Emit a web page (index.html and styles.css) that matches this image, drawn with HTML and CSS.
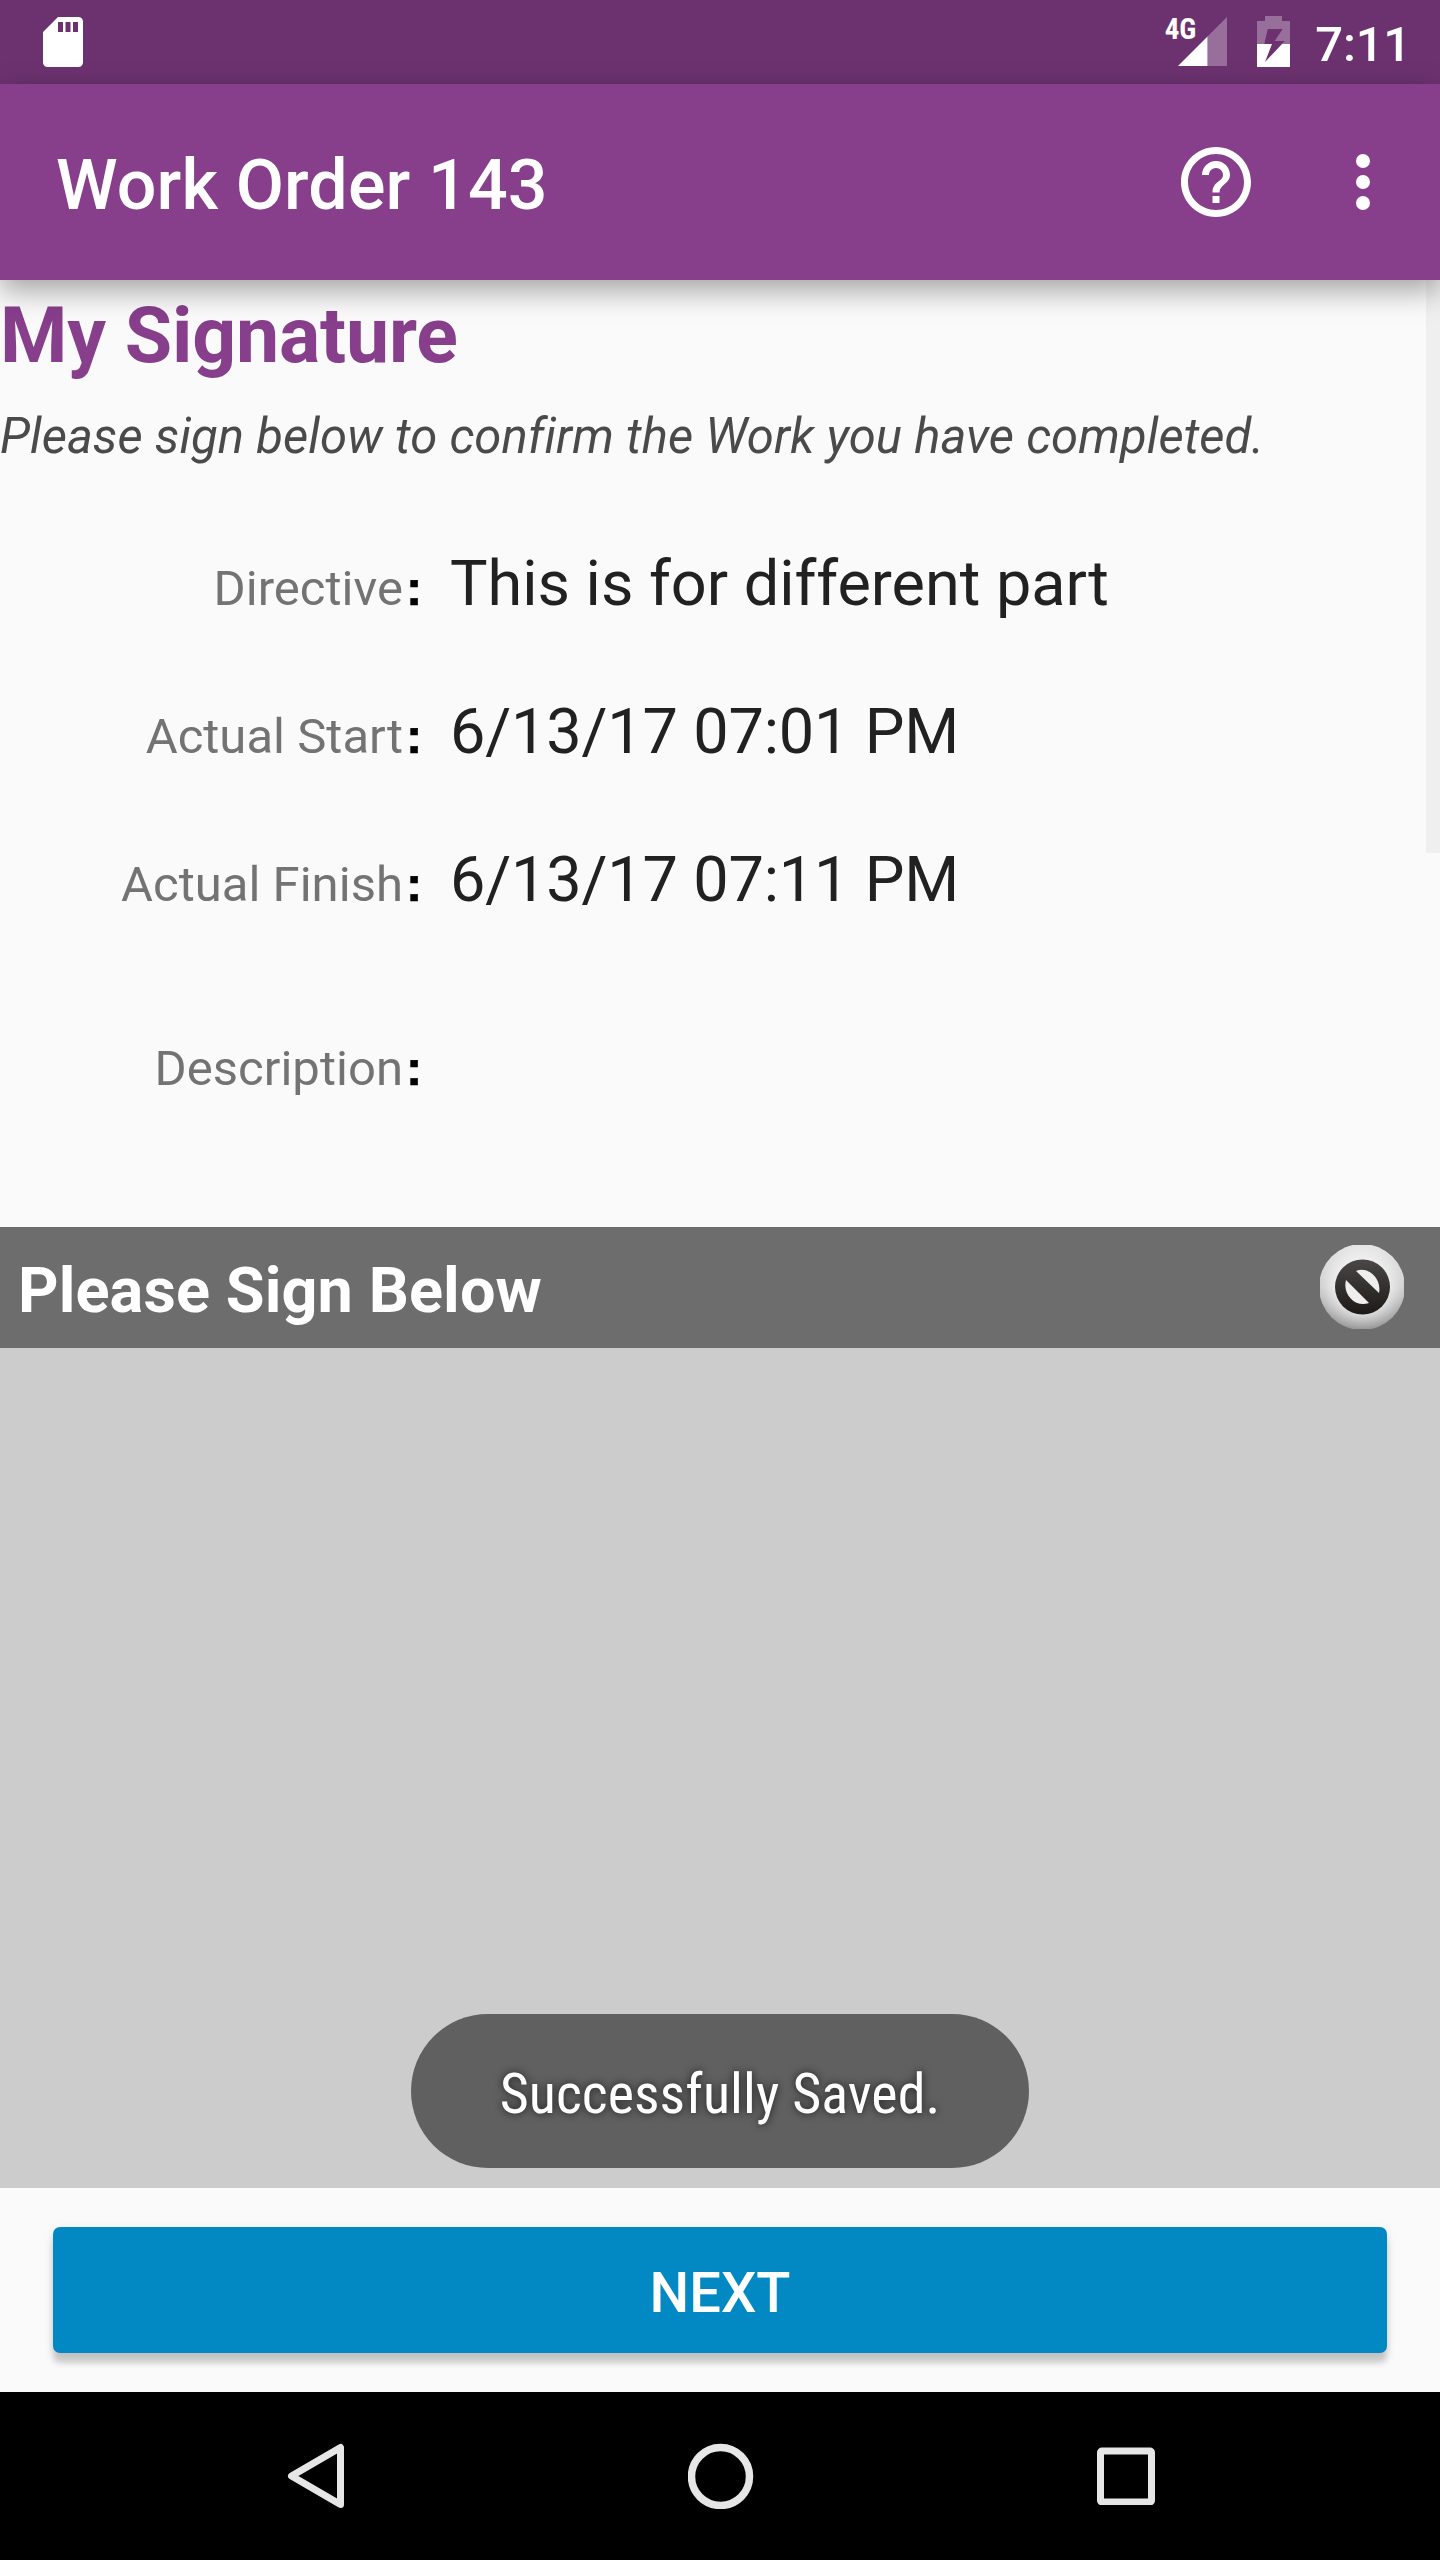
FILE: index.html
```html
<!DOCTYPE html>
<html lang="en">
<head>
<meta charset="utf-8">
<title>Work Order 143</title>
<link rel="stylesheet" href="styles.css">
</head>
<body>
<div class="screen">
  <div class="status-bar">
    <svg class="sd-card" width="40" height="50" viewBox="0 0 40 50"><path fill="#fff" fill-rule="evenodd" d="M15 0H35.500a4.500 4.500 0 0 1 4.500 4.500V45.500a4.500 4.500 0 0 1-4.500 4.500H4.500a4.500 4.500 0 0 1-4.500-4.500V15zM15 5v10h5V5zM22.500 5v10h5V5zM30 5v10h5V5z"/></svg>
    <div class="status-right">
      <span class="network">4G</span>
      <svg class="signal" width="49" height="49" viewBox="0 0 49 49"><path fill="#fff" fill-opacity=".3" d="M29.500 19.500 49 0V49H29.500z"/><path fill="#fff" d="M0 49 29.500 19.500V49z"/></svg>
      <svg class="battery" width="33" height="51" viewBox="0 0 33 51"><path fill="#fff" fill-opacity=".3" fill-rule="evenodd" d="M8 0H25V5H33V28H24.500L28 25H17.700L25.700 13H10.700L7.300 28H0V5H8z"/><path fill="#fff" d="M0 28H15L8 46 25 28H33V51H0z"/></svg>
      <span class="clock">7:11</span>
    </div>
  </div>
  <header class="app-bar">
    <h1 class="app-title">Work Order 143</h1>
    <svg class="help" width="84" height="84" viewBox="0 0 24 24"><path fill="#fff" d="M11 18h2v-2h-2v2zm1-16C6.480 2 2 6.480 2 12s4.480 10 10 10 10-4.480 10-10S17.520 2 12 2zm0 18c-4.410 0-8-3.590-8-8s3.590-8 8-8 8 3.590 8 8-3.590 8-8 8zm0-14c-2.210 0-4 1.790-4 4h2c0-1.100.9-2 2-2s2 .9 2 2c0 2-3 1.750-3 5h2c0-2.250 3-2.500 3-5 0-2.210-1.790-4-4-4z"/></svg>
    <svg class="overflow" width="84" height="84" viewBox="0 0 84 84" fill="#fff"><circle cx="42" cy="21" r="7"/><circle cx="42" cy="42" r="7"/><circle cx="42" cy="63" r="7"/></svg>
  </header>
  <main class="details">
    <div class="scrollbar"></div>
    <h2 class="heading">My Signature</h2>
    <p class="hint">Please sign below to confirm the Work you have completed.</p>
    <div class="fields">
      <div class="field"><span class="label">Directive</span><span class="colon">:</span><span class="value">This is for different part</span></div>
      <div class="field"><span class="label">Actual Start</span><span class="colon">:</span><span class="value date">6/13/17 07:01 PM</span></div>
      <div class="field"><span class="label">Actual Finish</span><span class="colon">:</span><span class="value date">6/13/17 07:11 PM</span></div>
      <div class="field field-tall"><span class="label">Description</span><span class="colon">:</span><span class="value"></span></div>
    </div>
  </main>
  <div class="sign-header">
    <span class="sign-title">Please Sign Below</span>
    <svg class="clear" width="84" height="84" viewBox="0 0 84 84">
      <defs>
        <linearGradient id="rim" x1="0" y1="0" x2="0" y2="1"><stop offset="0" stop-color="#e6e6e6"/><stop offset=".5" stop-color="#d0d0d0"/><stop offset="1" stop-color="#989898"/></linearGradient>
        <radialGradient id="glow"><stop offset=".62" stop-color="#fff" stop-opacity=".6"/><stop offset="1" stop-color="#fff" stop-opacity="0"/></radialGradient>
        <linearGradient id="disc" x1="0" y1="0" x2="0" y2="1"><stop offset="0" stop-color="#4a4746"/><stop offset="1" stop-color="#1d1917"/></linearGradient>
        <clipPath id="box"><rect width="84" height="84"/></clipPath>
      </defs>
      <g clip-path="url(#box)">
        <circle cx="42" cy="42" r="43" fill="url(#rim)"/>
        <circle cx="42" cy="42" r="42" fill="url(#glow)"/>
      </g>
      <circle cx="42.500" cy="42" r="27.500" fill="url(#disc)"/>
      <path fill="#eee" d="M36 26C48 21 62 33 59 48zM26 35C22 50 36 63 49 58z"/>
    </svg>
  </div>
  <div class="sign-pad"></div>
  <footer class="actions"><button class="next">NEXT</button></footer>
  <nav class="nav-bar">
    <svg width="58" height="66" viewBox="0 0 58 66"><path fill="none" stroke="#e6e6e6" stroke-width="7" stroke-linejoin="round" d="M53.500 4.500V61.500L4.500 33z"/></svg>
    <svg width="66" height="66" viewBox="0 0 66 66"><circle cx="32.500" cy="33.500" r="29" fill="none" stroke="#e6e6e6" stroke-width="7.500"/></svg>
    <svg width="58" height="58" viewBox="0 0 58 58"><rect x="3.500" y="4" width="51" height="51" rx="1.500" fill="none" stroke="#e6e6e6" stroke-width="7"/></svg>
  </nav>
  <div class="toast">Successfully Saved.</div>
</div>
</body>
</html>
```
FILE: styles.css
```css
* { box-sizing: border-box; }
body { margin: 0; font-family: Roboto, sans-serif; background: #fafafa; }
svg { display: block; flex: none; }
h1, h2, p { margin: 0; }

.screen { position: relative; width: 1440px; height: 2560px; display: flex; flex-direction: column; overflow: hidden; background: #fafafa; }

.status-bar { height: 84px; flex: none; display: flex; justify-content: space-between; background: #6c3270; color: #fff; padding: 0 29px 0 43px; }
.sd-card { margin-top: 17px; }
.status-right { display: flex; align-items: flex-start; }
.network { font-family: "Roboto Condensed", Roboto, sans-serif; font-stretch: 75%; font-size: 29px; font-weight: 700; line-height: 34px; margin-top: 12px; margin-right: -18px; }
.signal { margin-top: 17px; margin-right: 30px; }
.battery { margin-top: 16px; margin-right: 25px; }
.clock { font-size: 49px; font-weight: 500; line-height: 58px; margin-top: 16px; letter-spacing: -.2px; }

.app-bar { position: relative; z-index: 2; height: 196px; flex: none; display: flex; align-items: center; background: #873e8b; color: #fff; padding: 0 35px 0 56px; box-shadow: 0 10px 28px rgba(0, 0, 0, .36); }
.app-title { flex: 1; font-size: 70px; font-weight: 500; line-height: 82px; padding-top: 6px; letter-spacing: .15px; }
.overflow { margin-left: 63px; }

.details { position: relative; height: 947px; flex: none; padding-top: 11px; }
.scrollbar { position: absolute; top: 0; right: 0; width: 14px; height: 573px; background: #efefef; }
.heading { font-size: 77px; font-weight: 700; line-height: 90px; letter-spacing: -.17px; color: #873e8b; }
.hint { margin-top: 25px; font-size: 49px; font-style: italic; line-height: 62px; letter-spacing: .07px; color: #4a4a4a; }
.fields { padding-top: 5px; }
.field { height: 148px; padding-top: 74px; display: flex; align-items: baseline; }
.field-tall { margin-top: 41px; }
.label { width: 403px; text-align: right; font-size: 49px; line-height: 74px; letter-spacing: .03px; color: #737373; }
.colon { width: 47px; padding-left: 3px; font-family: "Liberation Sans", sans-serif; font-size: 49px; font-weight: 700; line-height: 60px; color: #000; -webkit-text-stroke: .6px #000; }
.value { font-size: 63px; line-height: 74px; letter-spacing: -.03px; color: #212121; }
.date { letter-spacing: -.17px; }

.sign-header { height: 121px; flex: none; display: flex; align-items: center; justify-content: space-between; padding: 0 36px 0 18px; background: #6d6d6d; color: #fff; }
.sign-title { font-size: 63px; font-weight: 700; line-height: 74px; padding-top: 6px; letter-spacing: .1px; }
.clear { margin-top: -1px; }
.sign-pad { height: 840px; flex: none; background: #ccc; }

.actions { height: 204px; flex: none; padding: 39px 53px; }
.next { display: block; width: 100%; height: 126px; border: 0; border-radius: 7px; padding: 5px 0 0; background: #0288c3; color: #fff; font-family: Roboto, sans-serif; font-size: 56px; font-weight: 500; box-shadow: 0 10px 6px rgba(0, 0, 0, .18), 0 3px 12px rgba(0, 0, 0, .08); }

.nav-bar { height: 168px; flex: none; display: flex; align-items: center; justify-content: space-between; padding: 0 285px 0 287px; background: #000; }

.toast { position: absolute; left: 411px; top: 2014px; width: 618px; height: 154px; border-radius: 77px; background: #606060; color: #fff; font-family: "Roboto Condensed", Roboto, sans-serif; font-stretch: 75%; font-size: 56px; line-height: 160px; letter-spacing: .05px; text-align: center; text-shadow: 0 0 8px rgba(0, 0, 0, .73); }
```
